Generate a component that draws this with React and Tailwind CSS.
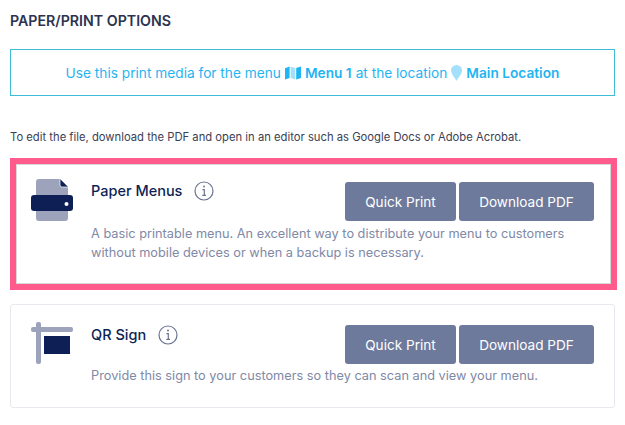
const font = { fontFamily: "Inter, 'Liberation Sans', sans-serif" };

function PrinterIcon() {
  return (
    <svg width="42" height="42" viewBox="0 0 42 42" className="block shrink-0">
      <path d="M7 0H29L37 8V39a3 3 0 0 1-3 3H8a3 3 0 0 1-3-3V3a3 3 0 0 1 3-3Z" fill="#9ca3bb" />
      <path d="M29 0L37 8H31a2 2 0 0 1-2-2Z" fill="#0e1f56" />
      <path d="M29 0V6a2 2 0 0 0 2 2h6" fill="none" stroke="#ffffff" strokeWidth="0.7" />
      <rect x="0" y="16" width="42" height="16" rx="3" fill="#0e1f56" />
      <circle cx="35.5" cy="25" r="2" fill="#ffffff" />
    </svg>
  );
}

function SignIcon() {
  return (
    <svg width="42" height="42" viewBox="0 0 42 42" className="block shrink-0">
      <rect x="5" y="0" width="5" height="42" rx="2" fill="#9ca3bb" />
      <rect x="0" y="5" width="42" height="5" rx="2" fill="#9ca3bb" />
      <rect x="13" y="14" width="26" height="18" fill="#0e1f56" />
    </svg>
  );
}

function InfoIcon() {
  return (
    <svg width="20" height="20" viewBox="0 0 20 20" className="block shrink-0" fill="none" stroke="#6b7592">
      <circle cx="10" cy="10" r="9" strokeWidth="1.2" />
      <circle cx="10" cy="5.6" r="1" fill="#6b7592" stroke="none" />
      <path d="M8.4 8.6H10.3V14.2M8.3 14.4H12" strokeWidth="1.2" />
    </svg>
  );
}

function MapIcon() {
  return (
    <svg width="16" height="14" viewBox="0 0 16 14" className="inline-block">
      <path d="M0 2.2L4.6 0.4V12L0 13.6Z" fill="#1fb4f2" />
      <path d="M5.6 0.4L10.2 2V13.6L5.6 12Z" fill="#a5e0fa" />
      <path d="M11.2 2L16 0.4V12L11.2 13.6Z" fill="#1fb4f2" />
    </svg>
  );
}

function PinIcon() {
  return (
    <svg width="11" height="16" viewBox="0 0 11 16" className="inline-block">
      <path d="M5.5 0A5.5 5.5 0 0 1 11 5.5C11 9 7 13 5.5 16 4 13 0 9 0 5.5A5.5 5.5 0 0 1 5.5 0Z" fill="#a5e0fa" />
    </svg>
  );
}

function Btn({ children, className }) {
  return (
    <button className={"h-[39px] rounded-[3px] bg-[#6e7a9c] pt-px text-[13.6px] font-normal text-white " + className}>
      {children}
    </button>
  );
}

function Head({ icon, title, top }) {
  return (
    <div className="flex items-start">
      <div className="-mt-[3px] w-[60px] shrink-0">{icon}</div>
      <div className={"flex items-center gap-[12px] " + top}>
        <span className="text-[14.5px] font-medium leading-5 text-[#0e1f56]">{title}</span>
        <InfoIcon />
      </div>
      <div className="ml-auto flex gap-[3px]">
        <Btn className="w-[111px]">Quick Print</Btn>
        <Btn className="w-[135px]">Download PDF</Btn>
      </div>
    </div>
  );
}

export default function App() {
  return (
    <div style={font} className="h-[425px] w-[625px] overflow-hidden bg-white px-[10px] pt-[13px] antialiased">
      <h2 className="text-[14.2px] font-semibold leading-4 text-[#2b3350]">PAPER/PRINT OPTIONS</h2>
      <div className="mt-[20px] flex h-[47px] w-[605px] items-center justify-center gap-[4px] border border-[#3fbcd8] pt-px text-[13.7px] text-[#1fb4f2]">
        <span>Use this print media for the menu</span>
        <MapIcon />
        <b className="font-semibold">Menu 1</b>
        <span>at the location</span>
        <PinIcon />
        <b className="font-semibold">Main Location</b>
      </div>
      <p className="mt-[33px] text-[11.25px] leading-4 text-[#3a4156]">
        To edit the file, download the PDF and open in an editor such as Google Docs or Adobe Acrobat.
      </p>
      <div className="mt-[13px] h-[132px] w-[607px] border-[6px] border-[#ff5c8d] bg-white">
        <div className="h-full border border-[#d8d8d8] pl-[14px] pr-[16px] pt-[17px]">
          <Head icon={<PrinterIcon />} title="Paper Menus" top="-mt-[1px]" />
          <p className="mt-[3px] pl-[60px] text-[12.75px] leading-[19px] text-[#7f89a6]">
            A basic printable menu. An excellent way to distribute your menu to customers
            <br />
            without mobile devices or when a backup is necessary.
          </p>
        </div>
      </div>
      <div className="mt-[14px] h-[104px] w-[605px] rounded-[3px] border border-[#e8e9ee] px-[20px] pt-[20px]">
        <Head icon={<SignIcon />} title="QR Sign" top="pt-0" />
        <p className="mt-[2px] pl-[60px] text-[12.75px] leading-[19px] text-[#7f89a6]">
          Provide this sign to your customers so they can scan and view your menu.
        </p>
      </div>
    </div>
  );
}
